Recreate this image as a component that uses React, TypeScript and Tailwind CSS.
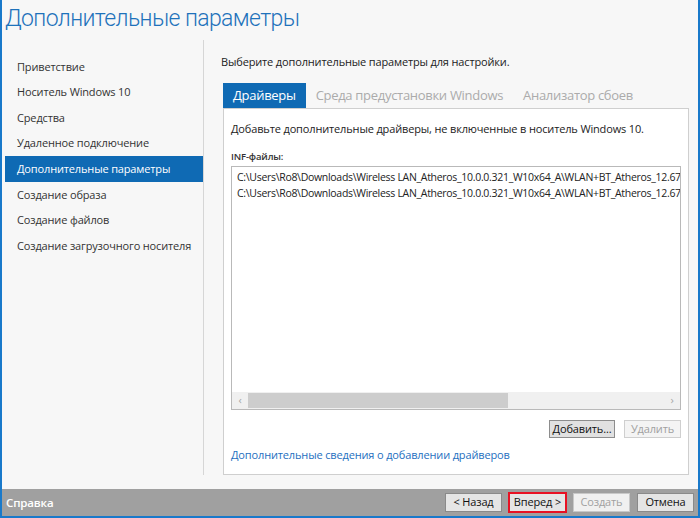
import React from 'react';

const NAV = [
    'Приветствие',
    'Носитель Windows 10',
    'Средства',
    'Удаленное подключение',
    'Дополнительные параметры',
    'Создание образа',
    'Создание файлов',
    'Создание загрузочного носителя',
];

const INF_PATH = 'C:\\Users\\Ro8\\Downloads\\Wireless LAN_Atheros_10.0.0.321_W10x64_A\\WLAN+BT_Atheros_12.67_';

function FooterButton({ label, disabled, focused }: { label: string; disabled?: boolean; focused?: boolean }) {
    return (
        <div
            className={
                'w-[57px] h-[19px] flex items-center justify-center text-[11px] border ' +
                (focused
                    ? 'border-[#e81123] outline outline-1 outline-[#e81123] bg-[#e5e5e5] text-[#111]'
                    : disabled
                    ? 'border-[#c8c8c8] bg-[#f0f0f0] text-[#a0a0a0]'
                    : 'border-[#8a8a8a] bg-[#e5e5e5] text-[#111]')
            }
        >
            {label}
        </div>
    );
}

export default function App() {
    return (
        <div
            className="w-[700px] h-[518px] bg-[#f7f7f7] border-x-2 border-b-2 border-[#1979ca] flex flex-col overflow-hidden text-[#222] tracking-[-0.15px]"
            style={{ fontFamily: '"Open Sans", "Noto Sans", sans-serif' }}
        >
            {/* Заголовок */}
            <div
                className="h-[40px] pl-[3px] pt-[3px] text-[23px] leading-[32px] font-light text-[#1e72bb] tracking-[-0.6px]"
                style={{ fontFamily: 'Roboto, "Open Sans", sans-serif' }}
            >
                Дополнительные параметры
            </div>

            <div className="flex-1 flex min-h-0">
                {/* Навигация */}
                <div className="w-[202px] shrink-0 pl-[3px] pt-[14px] border-r border-[#d6d6d6] mb-[14px]">
                    {NAV.map((item) => (
                        <div
                            key={item}
                            className={
                                'h-[25.6px] flex items-center pl-[12px] text-[11px] whitespace-nowrap ' +
                                (item === 'Дополнительные параметры' ? 'bg-[#0f6ab4] text-white' : 'text-[#333]')
                            }
                        >
                            {item}
                        </div>
                    ))}
                </div>

                {/* Правая часть */}
                <div className="flex-1 min-w-0 pl-[17px] pr-[9px] pt-[13px] pb-[14px] flex flex-col">
                    <div className="text-[11px] leading-[18px] text-[#222]">Выберите дополнительные параметры для настройки.</div>

                    <div className="mt-[12px] flex items-end h-[25px] pl-[2px] text-[13px] tracking-[-0.3px]">
                        <div className="h-[25px] px-[10px] flex items-center bg-[#0f6ab4] text-white">Драйверы</div>
                        <div className="h-[25px] px-[10px] flex items-center text-[#ababab]">Среда предустановки Windows</div>
                        <div className="h-[25px] px-[10px] flex items-center text-[#ababab]">Анализатор сбоев</div>
                    </div>

                    <div className="flex-1 ml-[2px] bg-white border border-[#cfcfcf] px-[7px] pt-[11px] pb-[8px] flex flex-col">
                        <div className="text-[11px] leading-[18px]">
                            Добавьте дополнительные драйверы, не включенные в носитель Windows 10.
                        </div>
                        <div className="mt-[12px] text-[9.5px] leading-[14px] font-semibold text-[#333]">INF-файлы:</div>
                        <div className="mt-[2px] h-[244px] border border-[#b9b9b9] flex flex-col">
                            <div className="flex-1 overflow-hidden pl-[5px] pt-[2px] text-[10.5px] leading-[16px] text-[#222] whitespace-nowrap tracking-[-0.3px]">
                                <div>{INF_PATH}</div>
                                <div>{INF_PATH}</div>
                            </div>
                            <div className="h-[17px] bg-[#f0f0f0] flex items-center text-[#a6a6a6] text-[11px]">
                                <div className="w-[16px] flex justify-center">‹</div>
                                <div className="h-[15px] w-[260px] bg-[#cdcdcd]" />
                                <div className="flex-1" />
                                <div className="w-[16px] flex justify-center">›</div>
                            </div>
                        </div>
                        <div className="mt-[10px] flex justify-end gap-[9px]">
                            <div className="w-[66px] h-[18px] flex items-center justify-center text-[11px] bg-[#e1e1e1] border border-[#8d8d8d] text-[#111]">
                                Добавить...
                            </div>
                            <div className="w-[57px] h-[18px] flex items-center justify-center text-[11px] bg-[#f4f4f4] border border-[#cfcfcf] text-[#a0a0a0]">
                                Удалить
                            </div>
                        </div>
                        <div className="mt-[9px] text-[11px] leading-[16px] text-[#1e6fc0]">
                            Дополнительные сведения о добавлении драйверов
                        </div>
                    </div>
                </div>
            </div>

            {/* Нижняя панель */}
            <div className="h-[27px] bg-[#a0a0a0] flex items-center pl-[4px] pr-[4px]">
                <div className="text-[11.5px] font-semibold text-white">Справка</div>
                <div className="flex-1" />
                <div className="flex gap-[7px]">
                    <FooterButton label="< Назад" />
                    <FooterButton label="Вперед >" focused />
                    <FooterButton label="Создать" disabled />
                    <FooterButton label="Отмена" />
                </div>
            </div>
        </div>
    );
}
